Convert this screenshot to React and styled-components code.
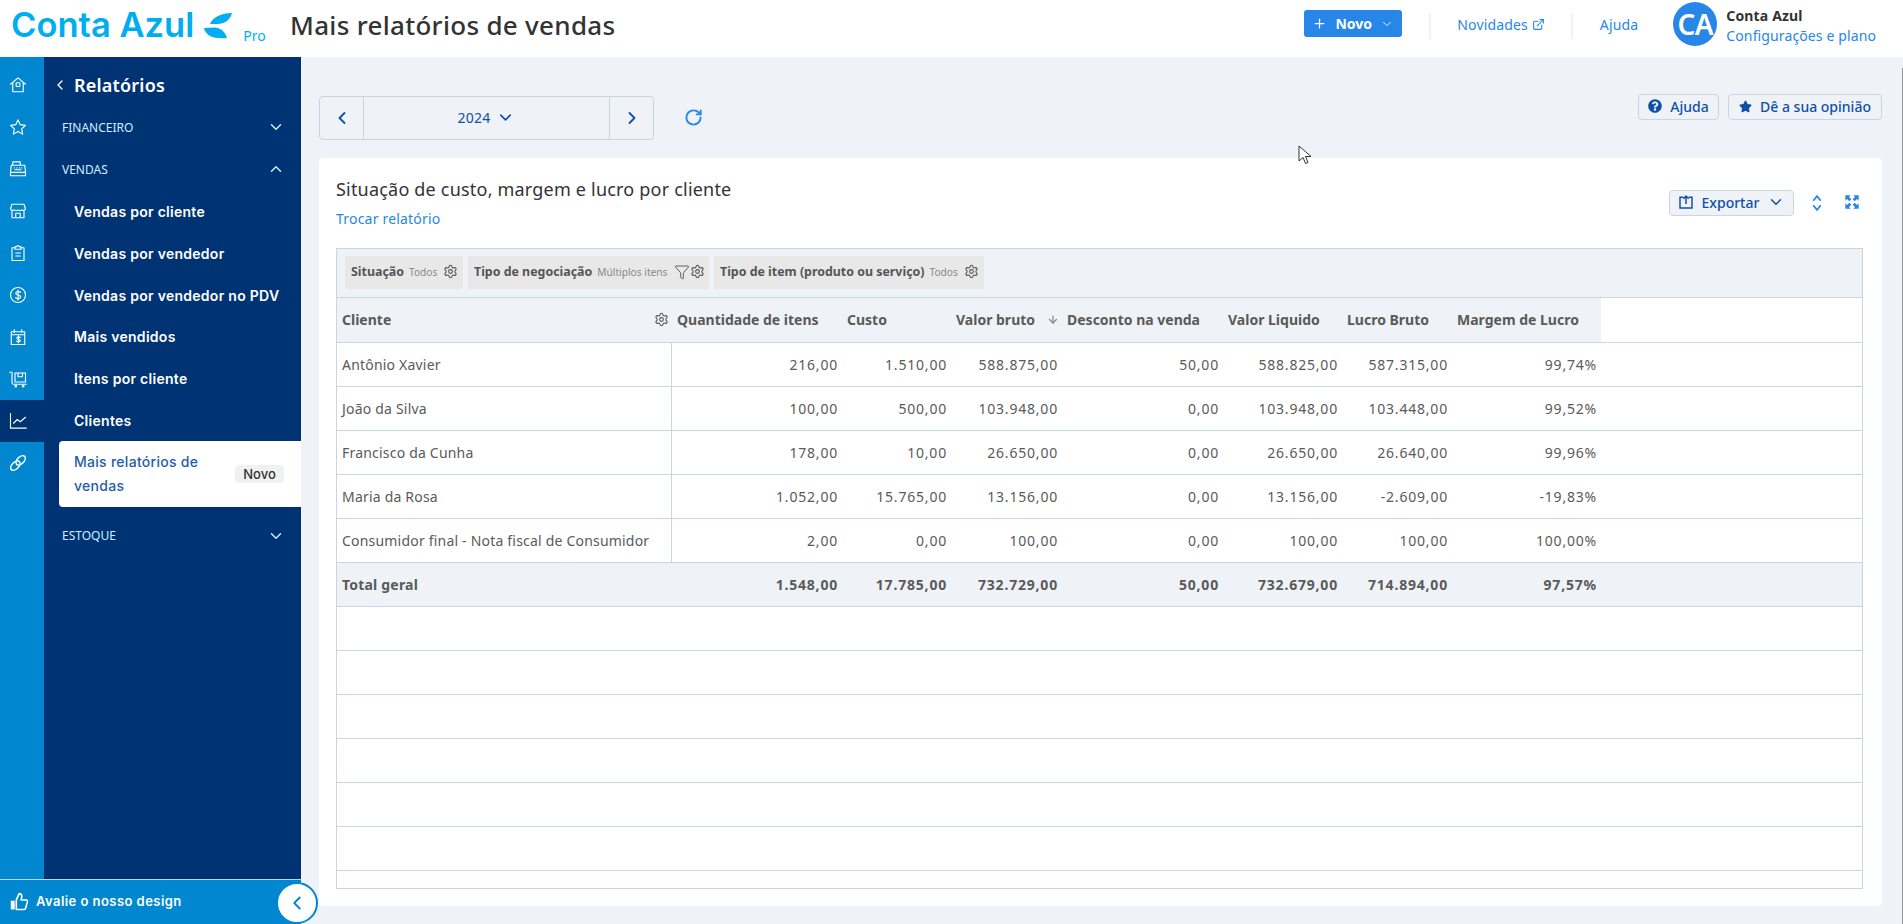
import React from "react";
import styled, { createGlobalStyle } from "styled-components";
import {
  ChevronDown,
  ChevronLeft,
  ChevronRight,
  ChevronUp,
  RotateCw,
  Plus,
  ExternalLink,
  ArrowDown,
  Funnel,
  Settings,
} from "lucide-react";
import { FaQuestionCircle, FaStar } from "react-icons/fa";

const GlobalStyle = createGlobalStyle`
  html, body { margin: 0; padding: 0; }
  body {
    font-family: "Noto Sans", "Liberation Sans", sans-serif;
    background: #eff3f8;
  }
  * { box-sizing: border-box; }
`;

const Page = styled.div`
  position: relative;
  width: 1903px;
  height: 924px;
  overflow: hidden;
  display: flex;
  flex-direction: column;
`;

const TopBar = styled.header`
  height: 57px;
  flex: none;
  background: #fff;
  display: flex;
  align-items: center;
  padding: 0 27px 0 11px;
`;

const Logo = styled.div`
  width: 279px;
  flex: none;
  display: flex;
  align-items: center;
  color: #00aeef;
  margin-bottom: 7px;
`;

const LogoText = styled.span`
  font-family: "Inter", sans-serif;
  font-weight: 600;
  font-size: 34.5px;
  line-height: 50px;
`;

const ProTag = styled.span`
  font-size: 14px;
  margin: 20px 0 0 10px;
`;

const PageTitle = styled.h1`
  margin: 0 0 8px;
  font-size: 26px;
  font-weight: 500;
  letter-spacing: 0.3px;
  color: #333;
  flex: 1;
`;

const NewButton = styled.button`
  width: 98px;
  height: 27px;
  margin-bottom: 10px;
  border: none;
  border-radius: 3px;
  background: #2687e9;
  color: #fff;
  font: 700 14px "Noto Sans", sans-serif;
  display: flex;
  align-items: center;
  justify-content: center;
  gap: 8px;
`;

const Divider = styled.div`
  width: 2px;
  height: 26px;
  background: #eff3f8;
  margin-left: ${(p) => p.$left}px;
  margin-bottom: 5px;
`;

const TopLink = styled.a`
  margin-left: ${(p) => p.$left}px;
  color: #2687e9;
  font-size: 14px;
  letter-spacing: 0.15px;
  display: flex;
  align-items: center;
  gap: 4px;
  margin-bottom: 9px;
`;

const Avatar = styled.div`
  width: 44px;
  height: 44px;
  border-radius: 50%;
  background: #2687e9;
  color: #fff;
  font-size: 28px;
  font-weight: 600;
  letter-spacing: -0.5px;
  display: flex;
  align-items: center;
  justify-content: center;
  margin-left: 35px;
  margin-bottom: 9px;
  flex: none;
`;

const UserInfo = styled.div`
  margin-left: 9px;
  margin-bottom: 5px;
  font-size: 14px;
  line-height: 20px;
`;

const UserName = styled.div`
  font-weight: 700;
  font-size: 14px;
  letter-spacing: 0.15px;
  color: #333;
`;

const UserLink = styled.div`
  color: #2687e9;
  letter-spacing: 0.12px;
`;

const Body = styled.div`
  flex: 1;
  display: flex;
  min-height: 0;
`;

const Nav = styled.nav`
  position: relative;
  width: 301px;
  flex: none;
  display: flex;
  flex-direction: column;
`;

const NavColumns = styled.div`
  flex: 1;
  display: flex;
  min-height: 0;
`;

const Rail = styled.div`
  width: 44px;
  flex: none;
  background: #0087d0;
  padding-top: 7px;
`;

const RailItem = styled.div`
  height: 42px;
  display: flex;
  align-items: center;
  padding-left: 9px;
  background: ${(p) => (p.$active ? "#003373" : "transparent")};
  svg {
    width: 18px;
    height: 18px;
    fill: none;
    stroke: #fff;
    stroke-width: 1.5;
    stroke-linecap: round;
    stroke-linejoin: round;
  }
`;

const SideMenu = styled.div`
  flex: 1;
  background: #003373;
  padding-top: 7px;
  font-family: "Inter", sans-serif;
  color: #fff;
`;

const MenuHeading = styled.div`
  height: 42px;
  display: flex;
  align-items: center;
  padding-left: 8px;
  gap: 6px;
  font-family: "Noto Sans", sans-serif;
  font-size: 18px;
  font-weight: 600;
  letter-spacing: 0.2px;
`;

const SectionRow = styled.div`
  height: 42px;
  display: flex;
  align-items: center;
  justify-content: space-between;
  padding: 0 16px 0 18px;
  margin-top: ${(p) => p.$top || 0}px;
  font-family: "Noto Sans", sans-serif;
  font-size: 12px;
  color: #cdeeff;
`;

const SubList = styled.div`
  margin-top: 1px;
`;

const SubItem = styled.div`
  height: 41.67px;
  display: flex;
  align-items: center;
  padding-left: 30px;
  font-size: 14px;
  font-weight: 600;
  letter-spacing: 0.28px;
`;

const ActiveItem = styled.div`
  height: 66px;
  margin-left: 15px;
  padding: 0 17px 0 15px;
  background: #fff;
  border-radius: 4px 0 0 4px;
  display: flex;
  align-items: center;
  justify-content: space-between;
  color: #1f5ea8;
  font-size: 14px;
  font-weight: 500;
  letter-spacing: 0.28px;
  line-height: 24px;
`;

const NewTag = styled.span`
  width: 49px;
  height: 18px;
  border-radius: 4px;
  background: #f0f1f2;
  color: #333;
  font-size: 13px;
  letter-spacing: 0;
  display: flex;
  align-items: center;
  justify-content: center;
`;

const NavFooter = styled.div`
  height: 45px;
  flex: none;
  background: #0087d0;
  border-top: 1px solid #bcd9ec;
  display: flex;
  align-items: center;
  gap: 7px;
  padding: 0 0 2px 10px;
  color: #fff;
  font-family: "Inter", sans-serif;
  font-size: 13px;
  font-weight: 600;
  letter-spacing: 0.45px;
`;

const CollapseToggle = styled.div`
  position: absolute;
  right: -17px;
  bottom: 0px;
  width: 42px;
  height: 42px;
  border-radius: 50%;
  background: #fff;
  border: 2px solid #0087d0;
  color: #0087d0;
  display: flex;
  align-items: center;
  justify-content: center;
`;

const Main = styled.main`
  flex: 1;
  min-width: 0;
  padding: 37px 21px 18px 18px;
  display: flex;
  flex-direction: column;
`;

const Toolbar = styled.div`
  height: 46px;
  margin-bottom: 18px;
  flex: none;
  display: flex;
  align-items: flex-start;
`;

const YearStepper = styled.div`
  margin-top: 2px;
  width: 335px;
  height: 44px;
  border: 1px solid #c9d5e2;
  border-radius: 4px;
  display: grid;
  grid-template-columns: 43px 1fr 44px;
  color: #0f4fa8;
`;

const StepperCell = styled.div`
  display: flex;
  align-items: center;
  justify-content: center;
  gap: 6px;
  padding-bottom: 1px;
  font-size: 14px;
  letter-spacing: 0.2px;
  border-left: ${(p) => (p.$divided ? "1px solid #c9d5e2" : "none")};
`;

const RefreshWrap = styled.div`
  margin: 14px 0 0 30px;
  color: #2687e9;
  display: flex;
  flex: 1;
`;

const GhostButton = styled.button`
  height: 26px;
  width: ${(p) => p.$width}px;
  margin-left: ${(p) => p.$left || 0}px;
  border: 1px solid #c9d5e2;
  border-radius: 4px;
  background: ${(p) => p.$bg || "transparent"};
  color: #0f4fa8;
  font: 500 14px "Noto Sans", sans-serif;
  display: flex;
  align-items: center;
  justify-content: center;
  gap: 8px;
  padding: 0 0 2px;
`;

const Card = styled.section`
  flex: 1;
  min-height: 0;
  background: #fff;
  border-radius: 4px;
  padding: 20px 19px 17px 17px;
  display: flex;
  flex-direction: column;
`;

const CardHead = styled.div`
  height: 70px;
  flex: none;
  display: flex;
  justify-content: space-between;
`;

const CardTitle = styled.div`
  margin-top: -1px;
  font-size: 18px;
  line-height: 24px;
  letter-spacing: 0.2px;
  color: #333;
`;

const SwitchLink = styled.a`
  display: block;
  margin-top: 8px;
  font-size: 14px;
  line-height: 20px;
  letter-spacing: 0.2px;
  color: #2687e9;
`;

const CardActions = styled.div`
  margin: 12px 3px 0 0;
  display: flex;
  align-items: flex-start;
  color: #2687e9;
`;

const IconSlot = styled.div`
  margin: 4px 0 0 ${(p) => p.$left}px;
  display: flex;
`;

const ReportTable = styled.div`
  flex: 1;
  min-height: 0;
  overflow: hidden;
  border: 1px solid #c9d5e2;
`;

const FilterBand = styled.div`
  height: 49px;
  background: #eff3f8;
  border-bottom: 1px solid #c9d5e2;
  display: flex;
  padding: 7px 0 0 8px;
  gap: 5px;
`;

const FilterChip = styled.div`
  height: 33px;
  width: ${(p) => p.$width}px;
  background: #e8e8e8;
  display: flex;
  align-items: center;
  padding: 0 0 2px 6px;
  color: #555;
  font-size: 12.4px;
  font-weight: 700;
  white-space: nowrap;
  svg {
    flex: none;
  }
`;

const ChipHint = styled.span`
  font-size: 10.2px;
  font-weight: 400;
  color: #888;
  margin: 0 6px 0 5px;
`;

const Row = styled.div`
  display: grid;
  grid-template-columns: 335px 170px 109px 111px 161px 119px 110px 149px 1fr;
  height: ${(p) => (p.$head ? 45 : 44)}px;
  border-bottom: 1px solid #c9d5e2;
  color: #5a5a5a;
  font-size: 14px;
  font-weight: ${(p) => (p.$total ? 700 : 400)};
  background: ${(p) => (p.$total ? "#eff3f8" : "transparent")};
`;

const HeadCell = styled.div`
  display: flex;
  align-items: center;
  justify-content: ${(p) => (p.$spread ? "space-between" : "flex-start")};
  padding: 0 3px 2px 5px;
  background: #eff3f8;
  font-size: 14px;
  font-weight: 700;
  white-space: nowrap;
`;

const Cell = styled.div`
  display: flex;
  align-items: center;
  padding: 0 4px 0 5px;
  justify-content: ${(p) => (p.$first ? "flex-start" : "flex-end")};
  letter-spacing: ${(p) => (p.$first ? "0.2px" : "0.8px")};
  border-right: ${(p) => (p.$line ? "1px solid #c9d5e2" : "none")};
  white-space: nowrap;
`;

const ScrollEdge = styled.div`
  position: absolute;
  right: 0;
  top: 68px;
  bottom: 0;
  width: 1px;
  background: #8f959c;
`;

const CursorMark = styled.svg`
  position: absolute;
  left: 1298px;
  top: 145px;
`;

const GearIcon = () => <Settings size={15} strokeWidth={1.7} color="#555" />;

const railIcons = [
  <svg viewBox="0 0 24 24" key="home">
    <path d="M2 11L12 2.500 22 11M5 9v12h14V9" />
    <rect x="9.500" y="9" width="5" height="5" rx="1" />
  </svg>,
  <svg viewBox="0 0 24 24" key="star">
    <path d="M12 2.500l3 6.400 6.900.9-5 4.800 1.300 6.900-6.200-3.400-6.200 3.400 1.300-6.900-5-4.800 6.900-.9z" />
  </svg>,
  <svg viewBox="0 0 24 24" key="register">
    <path d="M5 7V2.500h10V7M3 7h18l1 9v5H2v-5zM2 16.500h20" />
    <path d="M7 10.500h.1M10.500 10.500h.1M14 10.500h.1M17 10.500h.1M8 13h8" />
  </svg>,
  <svg viewBox="0 0 24 24" key="store">
    <path d="M4 3h16l2 6a3.300 3.300 0 0 1-5 1.500 4 4 0 0 1-5 0 4 4 0 0 1-5 0A3.300 3.300 0 0 1 2 9zM4 12v9h16v-9M9 21v-6h6v6" />
  </svg>,
  <svg viewBox="0 0 24 24" key="clip">
    <path d="M8 5H4v17h16V5h-4M8 3.500h2.500a1.500 1.500 0 0 1 3 0H16V7H8zM9 12h6M9 16h6" />
  </svg>,
  <svg viewBox="0 0 24 24" key="money">
    <circle cx="12" cy="12" r="10" />
    <path d="M15.500 8.500C14.500 7 9 6.800 9 9.800c0 3.400 6.500 1.400 6.500 4.700 0 3-5.700 2.700-6.700 1M12 5.500v13" />
  </svg>,
  <svg viewBox="0 0 24 24" key="calendar">
    <path d="M3 5h18v17H3zM3 9h18M7 2v4M17 2v4" />
    <path d="M15 12.500c-.8-1-4.500-1-4.500 1 0 2.300 4.500 1 4.500 3.200 0 2-3.800 1.800-4.600.7M12.700 10.500v9" />
  </svg>,
  <svg viewBox="0 0 24 24" key="cart">
    <path d="M1 3h3v14a2 2 0 0 0 2 2h17M8 4h14v12H8zM12 4v5h6V4" />
    <circle cx="9" cy="21.500" r="1" />
    <circle cx="19" cy="21.500" r="1" />
  </svg>,
  <svg viewBox="0 0 24 24" key="chart">
    <path d="M2 2v19.500h21M6 15l5-5 4 3 7-6" />
  </svg>,
  <svg viewBox="0 0 24 24" key="link" style={{ strokeWidth: 2 }}>
    <ellipse cx="8.500" cy="15.500" rx="7.500" ry="4.500" transform="rotate(-45 8.500 15.500)" />
    <ellipse cx="15.500" cy="8.500" rx="7.500" ry="4.500" transform="rotate(-45 15.500 8.500)" />
  </svg>,
];

const subItems = [
  "Vendas por cliente",
  "Vendas por vendedor",
  "Vendas por vendedor no PDV",
  "Mais vendidos",
  "Itens por cliente",
  "Clientes",
];

const columns = [
  "Quantidade de itens",
  "Custo",
  "Valor bruto",
  "Desconto na venda",
  "Valor Liquido",
  "Lucro Bruto",
  "Margem de Lucro",
];

const rows = [
  ["Antônio Xavier", "216,00", "1.510,00", "588.875,00", "50,00", "588.825,00", "587.315,00", "99,74%"],
  ["João da Silva", "100,00", "500,00", "103.948,00", "0,00", "103.948,00", "103.448,00", "99,52%"],
  ["Francisco da Cunha", "178,00", "10,00", "26.650,00", "0,00", "26.650,00", "26.640,00", "99,96%"],
  ["Maria da Rosa", "1.052,00", "15.765,00", "13.156,00", "0,00", "13.156,00", "-2.609,00", "-19,83%"],
  ["Consumidor final - Nota fiscal de Consumidor", "2,00", "0,00", "100,00", "0,00", "100,00", "100,00", "100,00%"],
];

const totals = ["Total geral", "1.548,00", "17.785,00", "732.729,00", "50,00", "732.679,00", "714.894,00", "97,57%"];

const App = () => {
  return (
    <Page>
      <GlobalStyle />
      <TopBar>
        <Logo>
          <LogoText>Conta Azul</LogoText>
          <svg width="30" height="27" viewBox="0 0 30 27" style={{ marginLeft: 9 }}>
            <path d="M7 12C10 5 18 1 29 1 27 8 22 12 14 12z" fill="#00aeef" />
            <path d="M1 16l10-.5c7 0 11 4.500 13 10.500C12 27 3 25 1 16z" fill="#00aeef" />
          </svg>
          <ProTag>Pro</ProTag>
        </Logo>
        <PageTitle>Mais relatórios de vendas</PageTitle>
        <NewButton>
          <Plus size={15} strokeWidth={2} />
          Novo
          <ChevronDown size={14} strokeWidth={1.5} />
        </NewButton>
        <Divider $left={27} />
        <TopLink $left={26}>
          Novidades
          <ExternalLink size={13} strokeWidth={2} />
        </TopLink>
        <Divider $left={26} />
        <TopLink $left={27}>Ajuda</TopLink>
        <Avatar>CA</Avatar>
        <UserInfo>
          <UserName>Conta Azul</UserName>
          <UserLink>Configurações e plano</UserLink>
        </UserInfo>
      </TopBar>
      <Body>
        <Nav>
          <NavColumns>
            <Rail>
              {railIcons.map((icon, i) => (
                <RailItem key={i} $active={i === 8}>
                  {icon}
                </RailItem>
              ))}
            </Rail>
            <SideMenu>
              <MenuHeading>
                <ChevronLeft size={16} strokeWidth={2} />
                Relatórios
              </MenuHeading>
              <SectionRow>
                FINANCEIRO
                <ChevronDown size={18} strokeWidth={2} />
              </SectionRow>
              <SectionRow>
                VENDAS
                <ChevronUp size={18} strokeWidth={2} />
              </SectionRow>
              <SubList>
                {subItems.map((item, i) => (
                  <SubItem key={i}>{item}</SubItem>
                ))}
                <ActiveItem>
                  <span>
                    Mais relatórios de
                    <br />
                    vendas
                  </span>
                  <NewTag>Novo</NewTag>
                </ActiveItem>
              </SubList>
              <SectionRow $top={8}>
                ESTOQUE
                <ChevronDown size={18} strokeWidth={2} />
              </SectionRow>
            </SideMenu>
          </NavColumns>
          <NavFooter>
            <svg width="19" height="19" viewBox="0 0 24 24" fill="none" stroke="currentColor" strokeWidth="2" strokeLinejoin="round">
              <rect x="1" y="11" width="5" height="11" fill="currentColor" strokeWidth="0" />
              <path d="M15 5.900L14 10h6a2 2 0 0 1 2 2.500l-2.300 8a2 2 0 0 1-2 1.500H8V10l3.500-8c1.500 0 3.500 1 3.500 3.900z" />
            </svg>
            Avalie o nosso design
          </NavFooter>
          <CollapseToggle>
            <ChevronLeft size={22} strokeWidth={2} />
          </CollapseToggle>
        </Nav>
        <Main>
          <Toolbar>
            <YearStepper>
              <StepperCell>
                <ChevronLeft size={20} strokeWidth={2.2} />
              </StepperCell>
              <StepperCell $divided>
                2024
                <ChevronDown size={19} strokeWidth={2} />
              </StepperCell>
              <StepperCell $divided>
                <ChevronRight size={20} strokeWidth={2.2} />
              </StepperCell>
            </YearStepper>
            <RefreshWrap>
              <RotateCw size={19} strokeWidth={2.4} />
            </RefreshWrap>
            <GhostButton $width={81}>
              <FaQuestionCircle size={14} />
              Ajuda
            </GhostButton>
            <GhostButton $width={154} $left={9}>
              <FaStar size={13} />
              Dê a sua opinião
            </GhostButton>
          </Toolbar>
          <Card>
            <CardHead>
              <div>
                <CardTitle>Situação de custo, margem e lucro por cliente</CardTitle>
                <SwitchLink>Trocar relatório</SwitchLink>
              </div>
              <CardActions>
                <GhostButton $width={125} $bg="#eff3f8">
                  <svg width="16" height="16" viewBox="0 0 24 24" fill="none" stroke="currentColor" strokeWidth="2.2">
                    <path d="M8 5H3v16h18V5h-5M12 15V3M8 7l4-4 4 4" />
                  </svg>
                  Exportar
                  <ChevronDown size={18} strokeWidth={2} />
                </GhostButton>
                <IconSlot $left={14}>
                  <svg width="18" height="18" viewBox="0 0 24 24" fill="none" stroke="currentColor" strokeWidth="2.4">
                    <path d="M7 9l5-6 5 6M7 15l5 6 5-6" />
                  </svg>
                </IconSlot>
                <IconSlot $left={18}>
                  <svg width="16" height="16" viewBox="0 0 24 24" fill="currentColor">
                    <path d="M2 2h8L7.500 4.500 11 8 8 11 4.500 7.500 2 10zM22 2v8l-2.500-2.500L16 11l-3-3 3.500-3.500L14 2zM2 22v-8l2.500 2.500L8 13l3 3-3.500 3.500L10 22zM22 22h-8l2.500-2.500L13 16l3-3 3.500 3.500L22 14z" />
                  </svg>
                </IconSlot>
              </CardActions>
            </CardHead>
            <ReportTable>
              <FilterBand>
                <FilterChip $width={118}>
                  Situação<ChipHint>Todos</ChipHint>
                  <GearIcon />
                </FilterChip>
                <FilterChip $width={241}>
                  Tipo de negociação<ChipHint>Múltiplos itens</ChipHint>
                  <Funnel size={16} strokeWidth={1.4} />
                  <GearIcon />
                </FilterChip>
                <FilterChip $width={270}>
                  Tipo de item (produto ou serviço)<ChipHint>Todos</ChipHint>
                  <GearIcon />
                </FilterChip>
              </FilterBand>
              <Row $head>
                <HeadCell $spread>
                  Cliente
                  <GearIcon />
                </HeadCell>
                {columns.map((col) => (
                  <HeadCell key={col}>
                    {col}
                    {col === "Valor bruto" && <ArrowDown size={15} strokeWidth={2.5} color="#888" style={{ marginLeft: 12 }} />}
                  </HeadCell>
                ))}
              </Row>
              {rows.map((row) => (
                <Row key={row[0]}>
                  {row.map((value, i) => (
                    <Cell key={i} $first={i === 0} $line={i === 0}>
                      {value}
                    </Cell>
                  ))}
                </Row>
              ))}
              <Row $total>
                {totals.map((value, i) => (
                  <Cell key={i} $first={i === 0}>
                    {value}
                  </Cell>
                ))}
              </Row>
              {Array.from({ length: 7 }, (_, i) => (
                <Row key={i} />
              ))}
            </ReportTable>
          </Card>
        </Main>
      </Body>
      <ScrollEdge />
      <CursorMark width="14" height="20" viewBox="0 0 14 20">
        <path d="M1 1v15l4-3.500 2.500 6 2.500-1-2.500-6H13z" fill="#fff" stroke="#333" strokeWidth="1" />
      </CursorMark>
    </Page>
  );
};

export default App;
